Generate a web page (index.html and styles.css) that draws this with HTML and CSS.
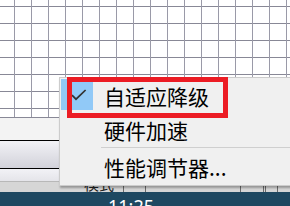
FILE: index.html
```html
<!DOCTYPE html>
<html lang="zh-CN">
<head>
<meta charset="utf-8">
<title>菜单</title>
<link rel="stylesheet" href="styles.css">
</head>
<body>
<div class="screen">
  <div class="canvas"></div>
  <div class="blank"></div>
  <div class="bar bar-a"></div>
  <div class="bar bar-b">
    <div class="status">
      <div class="cell c1"><span class="stxt">模式</span></div>
      <div class="cell c2"></div>
      <div class="cell c3"></div>
      <div class="cell c4"></div>
      <div class="cell c5"></div>
      <div class="cell c6"></div>
      <div class="cell c7"></div>
    </div>
  </div>
  <div class="taskbar"><span class="clock">11:25</span></div>

  <div class="menu">
    <div class="item">
      <span class="check on">
        <svg width="32" height="31" viewBox="0 0 32 31"><path d="M11 16.2 L15 20.2 L24.6 11" fill="none" stroke="#333" stroke-width="1.7"/></svg>
      </span>
      <span class="label">自适应降级</span>
    </div>
    <div class="item">
      <span class="check"></span>
      <span class="label">硬件加速</span>
    </div>
    <div class="sep"></div>
    <div class="item">
      <span class="check"></span>
      <span class="label">性能调节器...</span>
    </div>
  </div>
  <div class="annot"></div>
</div>
</body>
</html>
```
FILE: styles.css
```css
html, body {
  margin: 0;
  padding: 0;
}
body {
  width: 290px;
  height: 206px;
  overflow: hidden;
  background: #f0f0f0;
}
.screen {
  position: relative;
  width: 290px;
  height: 206px;
  overflow: hidden;
  display: flex;
  flex-direction: column;
}
.canvas {
  height: 117px;
  flex: none;
  background-color: #ffffff;
  background-image:
    linear-gradient(to right, #9a9aa8 1px, transparent 1px),
    linear-gradient(to bottom, #888896 1px, transparent 1px);
  background-size: 17px 17px, 17px 17px;
  background-position: 14px 0, 0 6px;
  border-bottom: 1px solid #888896;
}
.blank {
  height: 22px;
  flex: none;
  background: #f3f3f3;
}
.bar {
  flex: none;
  border-top: 1px solid #000;
}
.bar-a {
  height: 27px;
  background: linear-gradient(to bottom, #f2f2f6, #d2d2da);
}
.bar-b {
  height: 23px;
  background: linear-gradient(to bottom, #f2f2f6, #d8d8de);
  display: flex;
  flex-direction: column;
  justify-content: flex-end;
}
.status {
  height: 10px;
  display: flex;
  background: #d6d6d6;
  border-top: 1px solid #b8b8b8;
}
.cell {
  height: 100%;
  border-right: 1px solid #6a6a6a;
  overflow: hidden;
  flex: none;
}
.c1 { width: 80px; border-right-color: #d6d6d6; overflow: visible; }
.c2 { width: 42px; }
.c3 { width: 21px; }
.c4 { width: 94px; }
.c5 { width: 22px; }
.c6 { width: 1px; }
.c7 { width: 11px; }
.stxt {
  display: block;
  margin-left: 84px;
  margin-top: -6px;
  font-family: "Noto Sans CJK SC", sans-serif;
  font-size: 15px;
  line-height: 15px;
  color: #222;
  white-space: nowrap;
}
.taskbar {
  flex: 1;
  background: #1e4861;
  padding-top: 5px;
  padding-left: 108px;
}
.clock {
  display: block;
  font-family: "Noto Sans", "Open Sans", sans-serif;
  font-size: 18px;
  line-height: 18px;
  color: #ffffff;
}
.menu {
  position: absolute;
  left: 59px;
  top: 77px;
  width: 250px;
  background: #f0f0f0;
  border: 1px solid #cccccc;
  padding: 1px 0 1px 1px;
  box-shadow: 1px 2px 2px rgba(0, 0, 0, 0.3);
}
.item {
  height: 34px;
  display: flex;
  align-items: center;
}
.check {
  width: 32px;
  height: 31px;
  align-self: flex-start;
  flex: none;
}
.check.on {
  background: #91c9f7;
}
.check svg {
  display: block;
}
.label {
  margin-left: 11px;
  font-family: "Noto Sans CJK SC", sans-serif;
  font-size: 21px;
  line-height: 34px;
  color: #000;
  white-space: nowrap;
}
.sep {
  height: 1px;
  background: #cfcfcf;
  margin: 0 0 2px 40px;
}
.annot {
  position: absolute;
  left: 67px;
  top: 77px;
  width: 151px;
  height: 31px;
  border: 5px solid #ec1c24;
}
```
